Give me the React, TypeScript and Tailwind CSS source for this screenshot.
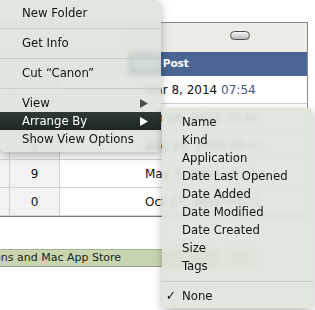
import React from "react";

const menuFont = {
  fontFamily: '"DejaVu Sans Condensed", "DejaVu Sans", sans-serif',
};

function Arrow({ light }: { light?: boolean }) {
  return (
    <svg width="8" height="9" viewBox="0 0 8 9" className="ml-auto mr-[13px]">
      <path d="M0 0 L8 4.5 L0 9 Z" fill={light ? "#ffffff" : "#4a4f4c"} />
    </svg>
  );
}

function Sep() {
  return (
    <div className="h-[12px] flex items-center">
      <div className="h-px w-full bg-[#c6cdc3]" />
    </div>
  );
}

const rows = [
  { n: "", date: "Mar 8, 2014", time: "07:54" },
  { n: "", date: "Jan 16, 2013", time: "20:40" },
  { n: "1", date: "Aug 23, 2013", time: "06:01" },
  { n: "9", date: "May 7, 2013", time: "10:13" },
  { n: "0", date: "Oct 27, 2012", time: "09:11" },
];

export default function App() {
  return (
    <div
      className="relative w-[315px] h-[310px] overflow-hidden bg-white text-[#111]"
      style={{ fontFamily: '"DejaVu Sans", Verdana, sans-serif' }}
    >
      {/* page behind the menus */}
      <div className="h-[22px]" />
      <div className="w-[308px] border-t border-r border-[#8a8a8a]">
        <div className="h-[29px] flex">
          <div className="w-[128px] bg-[#fafaf8]" />
          <div className="flex-1 bg-[#ecebe6] flex items-start justify-end pr-[57px] pt-[8px]">
            <div className="w-[20px] h-[9px] rounded-full border border-[#4d4d4d] bg-gradient-to-b from-[#fafafa] to-[#b9b9b9]" />
          </div>
        </div>
        <div className="h-[24px] flex">
          <div className="w-[128px] bg-[#f7f7f5]" />
          <div className="flex-1 bg-[#4a6593] text-white font-bold text-[10.5px] flex items-center pl-[6px]">
            Last Post
          </div>
        </div>
        {rows.map((r, i) => (
          <div key={i} className="h-[28px] flex border-b border-[#d3d3d3] text-[12px]">
            <div className="w-[10px] border-r border-[#cfcfcf] bg-[#f2f2f2]" />
            <div className="w-[50px] border-r border-[#cfcfcf] bg-[#f2f2f2] flex items-center justify-center">
              {r.n}
            </div>
            <div className="flex-1 flex items-center pl-[85px] whitespace-nowrap">
              {r.date}&nbsp;<span className="text-[#3f5488]">{r.time}</span>
            </div>
          </div>
        ))}
        <div className="h-px bg-[#7a7a7a]" />
      </div>
      <div className="h-[32px]" />
      <div className="flex items-start">
        <div className="w-[220px] h-[18px] bg-[#c7d6b0] border-t border-[#a5b58f] border-b border-b-[#9a9a9a] flex items-center">
          <div className="w-[121px] overflow-hidden flex justify-end whitespace-nowrap text-[11px] text-[#1e1e1e]">
            Applications and Mac App Store
          </div>
        </div>
        <div className="ml-[3px] w-[34px] h-[18px] rounded-[3px] bg-[#d9e2cd] border border-[#b9c4ad] flex items-center justify-center text-[10px] text-[#8a9580]">
          Go
        </div>
      </div>

      {/* context menu */}
      <div
        className="absolute left-0 top-0 w-[161px] py-[4px] rounded-b-[5px] rounded-tr-[5px] bg-[rgba(221,228,218,0.87)] backdrop-blur-[2px] shadow-[0_3px_10px_rgba(0,0,0,0.28)] text-[13px]"
        style={menuFont}
      >
        <div className="h-[18px] flex items-center pl-[22px]">New Folder</div>
        <Sep />
        <div className="h-[18px] flex items-center pl-[22px]">Get Info</div>
        <Sep />
        <div className="h-[18px] flex items-center pl-[22px]">Cut “Canon”</div>
        <Sep />
        <div className="h-[18px] flex items-center pl-[22px]">
          View
          <Arrow />
        </div>
        <div className="h-[18px] flex items-center pl-[22px] bg-gradient-to-b from-[#2f3a36] to-[#1d2724] text-white font-medium">
          Arrange By
          <Arrow light />
        </div>
        <div className="h-[18px] flex items-center pl-[22px]">Show View Options</div>
      </div>

      {/* submenu */}
      <div
        className="absolute left-[162px] top-[108px] w-[151px] h-[200px] pt-[5px] rounded-[5px] bg-[rgba(221,228,218,0.88)] backdrop-blur-[2px] shadow-[0_3px_10px_rgba(0,0,0,0.28)] text-[13px]"
        style={menuFont}
      >
        {[
          "Name",
          "Kind",
          "Application",
          "Date Last Opened",
          "Date Added",
          "Date Modified",
          "Date Created",
          "Size",
          "Tags",
        ].map((t) => (
          <div key={t} className="h-[18px] flex items-center pl-[20px]">
            {t}
          </div>
        ))}
        <Sep />
        <div className="h-[18px] flex items-center">
          <span className="w-[20px] pl-[4px] text-[13px]">✓</span>
          None
        </div>
      </div>
    </div>
  );
}
